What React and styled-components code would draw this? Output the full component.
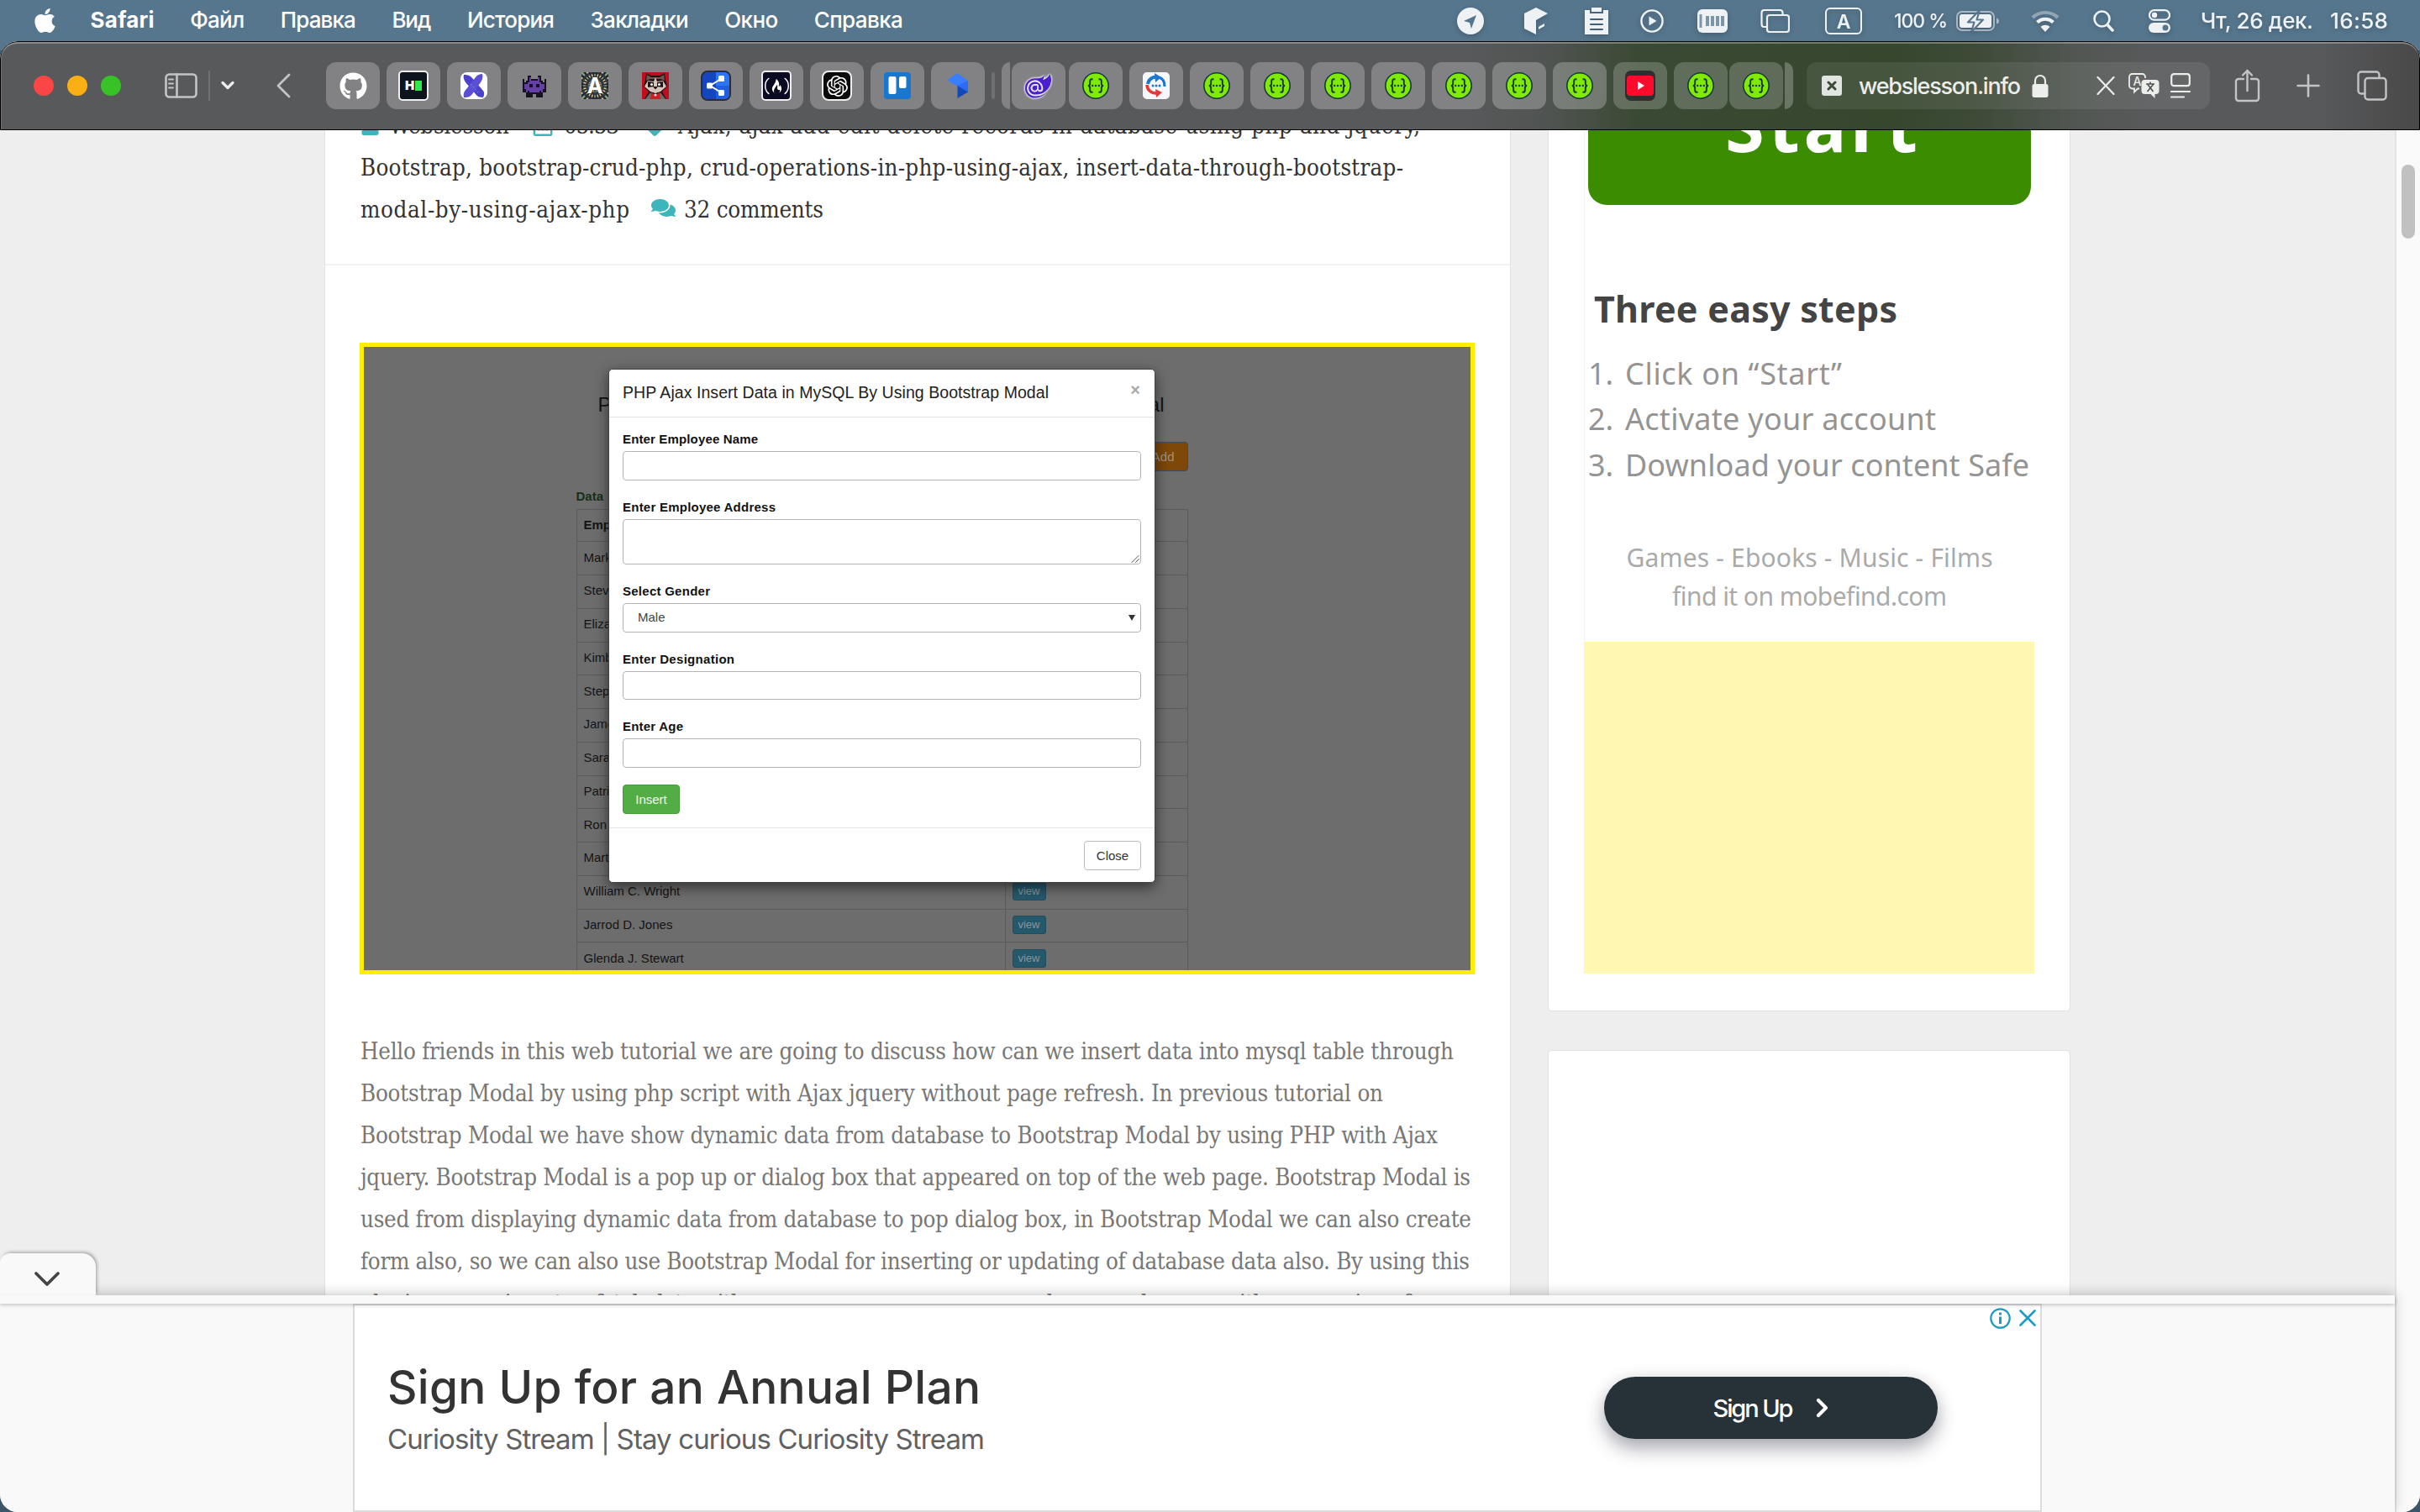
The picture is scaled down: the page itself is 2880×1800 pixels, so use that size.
import React, { useLayoutEffect, useRef, useState } from 'react';
import styled, { createGlobalStyle, css } from 'styled-components';
import { FaApple, FaGithub, FaComments, FaUser, FaRegCalendarAlt, FaTag } from 'react-icons/fa';
import { SiOpenai, SiFreecodecamp, SiBlazor } from 'react-icons/si';

const Global = createGlobalStyle`
  * { box-sizing: border-box; }
  html, body { margin: 0; padding: 0; overflow: hidden; background: #56768d; }
  svg { display: block; flex: none; }
`;

/* ---------- text set to an exact measure ---------- */
const Measured = styled.span`
  display: inline-block;
  flex: none;
  width: max-content;
  white-space: pre;
  vertical-align: top;
`;

function Fit({ w, children }) {
  const ref = useRef(null);
  const [spacing, setSpacing] = useState(0);
  useLayoutEffect(() => {
    const natural = ref.current.getBoundingClientRect().width;
    setSpacing((w - natural) / Math.max(1, children.length - 1));
  }, []);
  return (
    <Measured ref={ref} style={{ letterSpacing: spacing, marginRight: -spacing }}>
      {children}
    </Measured>
  );
}

/* ---------- system menu bar ---------- */
const Screen = styled.div`
  width: 2880px;
  height: 1800px;
  display: flex;
  flex-direction: column;
  overflow: hidden;
  background: linear-gradient(#56768d 0 60px, #3c5568 60px);
  font-family: Inter, 'Liberation Sans', sans-serif;
`;
const MenuBar = styled.header`
  height: 49px;
  flex: none;
  display: flex;
  align-items: center;
  justify-content: space-between;
  padding: 0 38px 0 40px;
  color: #fff;
  font-size: 26px;
  font-weight: 500;
  line-height: 44px;
`;
const Menus = styled.nav`
  display: flex;
  align-items: center;
  gap: 42.6px;
  height: 46px;
  padding-bottom: 1px;
`;
const MenuItem = styled.span`
  font-weight: ${(p) => (p.$bold ? 700 : 500)};
`;
const Status = styled.div`
  display: flex;
  align-items: center;
  height: 48px;
  color: #eef2f5;
  filter: drop-shadow(0 2px 3px rgba(0, 0, 0, 0.22));
`;
const Slot = styled.div`
  margin-left: ${(p) => p.$gap || 0}px;
  display: flex;
  flex: none;
  font-size: ${(p) => p.$size || 26}px;
`;

/* ---------- browser window ---------- */
const Window = styled.div`
  flex: 1;
  display: flex;
  flex-direction: column;
  border-radius: 21px;
  overflow: hidden;
  min-height: 0;
  background: #eee;
`;
const Toolbar = styled.div`
  height: 106px;
  flex: none;
  display: flex;
  align-items: center;
  padding: 0 36px 0 39px;
  border: 1px solid #000;
  border-radius: 21px 21px 0 0;
  box-shadow: inset 0 2px 0 rgba(255, 255, 255, 0.3), inset 1px 0 0 rgba(255, 255, 255, 0.15);
  color: #c3c4c5;
  background: linear-gradient(
    90deg,
    #58595b 0,
    #58595b 1740px,
    #505451 1840px,
    #3a4933 1950px,
    #37472e 2250px,
    #3c4a36 2340px,
    #535754 2480px,
    #58595b 2560px,
    #58595b 2760px,
    #484848 2880px
  );
`;
const Light = styled.i`
  width: 24px;
  height: 24px;
  flex: none;
  border-radius: 50%;
  margin-right: 16px;
  background: ${(p) => p.$color};
`;
const Rule = styled.i`
  width: ${(p) => p.$w}px;
  height: ${(p) => p.$h}px;
  flex: none;
  border-radius: 2px;
  margin-left: ${(p) => p.$gap}px;
  background: #6f7072;
`;
const Tab = styled.div`
  width: 64px;
  height: 56px;
  flex: none;
  border-radius: 12px;
  margin-left: ${(p) => (p.$gap === undefined ? 8 : p.$gap)}px;
  display: flex;
  align-items: center;
  justify-content: center;
  background: rgba(255, 255, 255, ${(p) => (p.$dim ? 0.2 : 0.25)});
`;
const StackEdge = styled.i`
  width: 10px;
  height: 56px;
  flex: none;
  background: rgba(255, 255, 255, 0.25);
  margin-left: ${(p) => p.$gap}px;
  border-radius: ${(p) => (p.$end ? '0 12px 12px 0' : '12px 0 0 12px')};
`;
const Favicon = styled.div`
  width: ${(p) => p.$w || 32}px;
  height: ${(p) => p.$w || 32}px;
  border-radius: ${(p) => (p.$r === undefined ? 5 : p.$r)}px;
  background: ${(p) => p.$bg};
  border: ${(p) => p.$border || 'none'};
  color: #fff;
  display: flex;
  align-items: center;
  justify-content: center;
  overflow: hidden;
`;
const HackGlyph = styled.div`
  display: flex;
  align-items: center;
  gap: 1px;
  font: 900 15px/16px Inter, sans-serif;
  i { width: 8px; height: 12px; background: #2fe853; }
`;
const Address = styled.div`
  width: 480px;
  height: 56px;
  flex: none;
  margin-left: 16px;
  border-radius: 12px;
  background: rgba(255, 255, 255, 0.08);
  display: flex;
  align-items: center;
  padding-left: 18px;
  color: #eceeec;
  font-size: 27px;
  font-weight: 500;
`;

/* ---------- page ---------- */
const Viewport = styled.div`
  flex: 1;
  min-height: 0;
  display: flex;
`;
const PageColumn = styled.div`
  width: 2850px;
  height: 1645px;
  flex: none;
  display: flex;
  flex-direction: column;
`;
const Page = styled.main`
  height: 1387px;
  flex: none;
  display: flex;
  align-items: flex-start;
  padding-left: 386px;
  gap: 44px;
  overflow: hidden;
  background: #eee;
`;
const Scrollbar = styled.div`
  flex: 1;
  background: #fafafa;
  border-left: 2px solid #e4e4e4;
  padding: 41px 6px 0 6px;
`;
const Thumb = styled.div`
  height: 88px;
  border-radius: 8px;
  background: #c1c1c1;
`;
const Card = styled.article`
  width: 1412px;
  flex: none;
  background: #fff;
  border: solid #e1e1e1;
  border-width: 0 1px;
`;
const serif = css`
  font-family: 'DejaVu Serif Condensed', 'DejaVu Serif', serif;
  font-stretch: condensed;
  font-size: 27.5px;
  line-height: 50px;
`;
const Meta = styled.div`
  ${serif}
  color: #333;
  margin-top: -31px;
  padding: 0 42px 40px;
  border-bottom: 2px solid #f1f1f1;
`;
const Line = styled.div`
  height: 50px;
  display: flex;
  align-items: center;
`;
const Teal = styled.span`
  display: flex;
  color: #3cb5bc;
  font-size: ${(p) => p.$s || 26}px;
  margin: 0 ${(p) => p.$after}px 0 ${(p) => p.$before || 0}px;
  padding-bottom: ${(p) => p.$lift || 0}px;
`;
const Paragraph = styled.div`
  ${serif}
  color: #777;
  margin-top: 66px;
  padding: 0 42px;
`;

/* ---------- demo image ---------- */
const Figure = styled.div`
  position: relative;
  margin: 92px 0 0 41px;
  width: 1327px;
  height: 752px;
  border: 5px solid #ffee00;
  background: #6d6d6d;
  box-shadow: inset 0 1px 0 #77740a;
  overflow: hidden;
  font: 15px/20px 'Liberation Sans', Arial, sans-serif;
`;
const Demo = styled.div`
  width: 728px;
  margin-left: 252.500px;
  display: flex;
  flex-direction: column;
  color: #141414;
`;
const DemoTitle = styled.div`
  margin: 55px 0 0 26px;
  width: 674px;
  display: flex;
  justify-content: space-between;
  font-size: 24px;
  line-height: 28px;
`;
const AddButton = styled.div`
  align-self: flex-end;
  width: 58px;
  height: 35px;
  margin-top: 30px;
  border: 1px solid #3e4a5c;
  border-radius: 4px;
  background: #7d4808;
  color: #9c9184;
  line-height: 34px;
  padding-right: 15px;
  text-align: right;
`;
const DataLabel = styled.div`
  margin-top: 20px;
  height: 25px;
  font-weight: 700;
  font-size: 15px;
  color: #16301a;
`;
const Table = styled.div`
  border: 1px solid #5a5a5a;
  border-bottom: 0;
`;
const TRow = styled.div`
  display: grid;
  grid-template-columns: 509px 1fr;
  height: ${(p) => (p.$head ? 38.3 : 39.75)}px;
  align-items: center;
  border-bottom: 1px solid #5a5a5a;
  font-weight: ${(p) => (p.$head ? 700 : 400)};
  div { height: 100%; padding: 0 0 2px 8px; display: flex; align-items: center; }
  div + div { border-left: 1px solid #5a5a5a; }
`;
const View = styled.span`
  width: 40px;
  height: 22px;
  border: 1px solid #1e4f60;
  border-radius: 3px;
  background: #26586b;
  color: #84969e;
  font-size: 13px;
  line-height: 20px;
  text-align: center;
`;
const Modal = styled.div`
  position: absolute;
  left: 291px;
  top: 26px;
  width: 651px;
  height: 612px;
  border-radius: 5px;
  border: 1px solid #444;
  background: #fff;
  box-shadow: 0 5px 16px rgba(0, 0, 0, 0.55);
  color: #222;
`;
const ModalHead = styled.div`
  height: 57px;
  border-bottom: 1px solid #e3e3e3;
  display: flex;
  justify-content: space-between;
  align-items: center;
  padding: 0 17px 2px 16px;
  font-size: 19.5px;
  b { color: #aaa; font-size: 20px; padding-bottom: 6px; }
`;
const ModalBody = styled.div`
  height: 489px;
  padding: 16px 16px 0;
  border-bottom: 1px solid #e3e3e3;
`;
const Label = styled.div`
  height: 24px;
  margin-top: ${(p) => p.$top || 0}px;
  font-weight: 700;
  font-size: 15px;
  line-height: 19px;
  color: #111;
`;
const Input = styled.div`
  height: ${(p) => p.$h || 34.6}px;
  border: 1px solid #b5b5b5;
  border-radius: 4px;
  display: flex;
  align-items: ${(p) => (p.$area ? 'flex-end' : 'center')};
  justify-content: space-between;
  padding: ${(p) => (p.$area ? 0 : '0 6px 0 17px')};
  color: #444;
  background: #fff;
  svg:only-child { margin-left: auto; }
`;
const Button = styled.div`
  width: 68px;
  height: 35px;
  border-radius: 4px;
  border: 1px solid ${(p) => (p.$green ? '#459b3a' : '#bbb')};
  background: ${(p) => (p.$green ? '#53ad45' : '#fff')};
  color: ${(p) => (p.$green ? '#eef8ec' : '#333')};
  line-height: 33px;
  text-align: center;
  margin: ${(p) => (p.$green ? '20px 0 0' : '15px 16px 0 auto')};
`;

/* ---------- sidebar ---------- */
const Sidebar = styled.aside`
  width: 622px;
  flex: none;
`;
const Widget = styled.section`
  background: #fff;
  border: 1px solid #e1e1e1;
  height: ${(p) => p.$h}px;
  margin-bottom: 46px;
  border-top-width: ${(p) => (p.$first ? 0 : 1)}px;
  border-radius: ${(p) => (p.$first ? '0 0 5px 5px' : '5px 5px 0 0')};
  padding-left: 42px;
`;
const Promo = styled.div`
  width: 536px;
  height: 1004px;
  border-left: 1px solid #fff7b2;
  font-family: 'Noto Sans', 'Open Sans', sans-serif;
  display: flex;
  flex-direction: column;
`;
const Start = styled.div`
  margin-left: 4px;
  width: 527px;
  height: 89px;
  flex: none;
  border-radius: 0 0 22px 22px;
  background: #3b8c00;
  color: #fff;
  font-weight: 700;
  font-size: 85px;
  line-height: 100px;
  padding-left: 163px;
  overflow: hidden;
  & > span { margin-top: -57px; }
`;
const StepsTitle = styled.div`
  margin: 94px 0 0 11px;
  font-weight: 700;
  font-size: 43px;
  line-height: 60px;
  color: #444;
`;
const Steps = styled.div`
  margin-top: 20px;
  font-size: 36px;
  line-height: 54.4px;
  color: #949494;
  display: grid;
  grid-template-columns: 44px 1fr;
  padding-left: 4px;
`;
const Tagline = styled.div`
  margin-top: 60px;
  font-size: 30px;
  line-height: 45.4px;
  color: #aaa;
  display: flex;
  flex-direction: column;
  align-items: center;
`;
const YellowSlot = styled.div`
  margin-top: auto;
  height: 395px;
  flex: none;
  background: #fff7b2;
`;

/* ---------- anchored advert ---------- */
const Anchor = styled.footer`
  position: relative;
  height: 258px;
  flex: none;
  display: flex;
  flex-direction: column;
  background: #f9f9f9;
  box-shadow: 0 -2px 14px rgba(0, 0, 0, 0.2);
`;
const Handle = styled.div`
  position: absolute;
  left: 0;
  top: -50px;
  width: 114px;
  height: 51px;
  border-radius: 12px 16px 0 0;
  background: #f9f9f9;
  box-shadow: 2px -2px 4px -1px rgba(0, 0, 0, 0.35);
  clip-path: inset(-8px -12px 1px 0);
  display: flex;
  justify-content: center;
  padding: 21px 3px 0 0;
`;
const Strip = styled.div`
  height: 10px;
  flex: none;
  z-index: 1;
  background: #f9f9f9;
  box-shadow: 0 2px 4px rgba(0, 0, 0, 0.2);
`;
const Advert = styled.div`
  width: 2010px;
  height: 248px;
  margin-left: 420px;
  border: 2px solid #dcdcdc;
  background: #fff;
  display: flex;
  padding-left: 39px;
`;
const Copy = styled.div`
  width: 1448px;
  padding-top: 57px;
`;
const Headline = styled.div`
  font-size: 55px;
  font-weight: 500;
  line-height: 80px;
  color: #333;
  height: 78px;
`;
const Subline = styled.div`
  font-size: 33px;
  line-height: 48px;
  color: #616161;
`;
const SignUp = styled.div`
  width: 397px;
  height: 74px;
  flex: none;
  margin-top: 85px;
  border-radius: 37px;
  background: #263238;
  color: #fff;
  box-shadow: 0 12px 22px rgba(38, 42, 60, 0.36), 0 0 20px rgba(0, 0, 0, 0.08);
  font-size: 29px;
  font-weight: 500;
  display: flex;
  align-items: center;
  justify-content: center;
  gap: 27px;
`;
const AdChoices = styled.div`
  margin: 2px 5px 0 auto;
  display: flex;
  align-items: center;
  gap: 10px;
  height: 26px;
`;

const Svg = ({ w, h, sw = 2, children }) => (
  <svg width={w} height={h} viewBox={`0 0 ${w} ${h}`} fill="none" stroke="currentColor" strokeWidth={sw} strokeLinecap="round" strokeLinejoin="round">
    {children}
  </svg>
);

const Swagger = () => (
  <svg width="32" height="32" viewBox="0 0 32 32">
    <circle cx="16" cy="16" r="15.2" fill="#80ea02" stroke="#173647" strokeWidth="1.6" />
    <g fill="none" stroke="#173647" strokeWidth="1.9">
      <path d="M12.500 8.200h-1c-1.800 0-2.300.8-2.300 2.400v2.600c0 1.700-.7 2.800-2.400 2.800 1.700 0 2.400 1.100 2.400 2.800v2.600c0 1.600.5 2.400 2.300 2.400h1" />
      <path d="M19.500 8.200h1c1.800 0 2.300.8 2.300 2.400v2.600c0 1.700.7 2.800 2.400 2.800-1.700 0-2.400 1.100-2.400 2.800v2.600c0 1.600-.5 2.400-2.300 2.400h-1" />
    </g>
    <g fill="#173647"><circle cx="12.200" cy="16" r="1.200" /><circle cx="16" cy="16" r="1.200" /><circle cx="19.800" cy="16" r="1.200" /></g>
  </svg>
);

const Invader = () => (
  <svg width="32" height="32" viewBox="0 0 16 16" shapeRendering="crispEdges">
    <path fill="#17121f" d="M4 2h2v2h4V2h2v3h1v1h2v6h-2v2h-2v1H9v-2H7v2H5v-1H3v-2H1V6h2V5h1zM1 4h1v3H1zM14 4h1v3h-1zM3 13h2v2H3zM11 13h2v2h-2z" />
    <path fill="#6540a5" d="M5 3h1v2h4V3h1v3h1v1h2v3h-1v2h-1v-1h-1v1H5v-1H4v1H3v-2H2V7h2V6h1z" />
    <path fill="#17121f" d="M5 7h2v2H5zM9 7h2v2H9z" />
  </svg>
);

const Raccoon = () => (
  <svg width="32" height="32" viewBox="0 0 32 32">
    <rect width="32" height="32" fill="#c40d1c" />
    <path d="M5 1l6 3h10l6-3 1 8 2 8-6 6 5 9H3l5-9-6-6 2-8z" fill="#1c1518" />
    <path d="M6 3l5 3h10l5-3 1 7-5-2H10l-5 2z" fill="#6f564e" />
    <path d="M3 17l4-7 7 1 2-5 2 5 7-1 4 7-7 6-6 2-6-2z" fill="#d8c4b8" />
    <path d="M7 11l7 1v5l-7 1zM25 11l-7 1v5l7 1z" fill="#1c1518" />
    <circle cx="11.500" cy="14.500" r="1.500" fill="#fff" /><circle cx="20.500" cy="14.500" r="1.500" fill="#fff" />
    <path d="M13 17h6l-3 3.500z" fill="#1c1518" />
    <path d="M4 32l6-8 4 8zM28 32l-6-8-4 8z" fill="#6f6a6a" />
    <path d="M11 24l5 3 5-3 1 8H10z" fill="#d21b22" /><circle cx="16" cy="27" r="1.600" fill="#ddd" />
  </svg>
);

const rays = Array.from({ length: 24 }, (_, i) => i * 15);
const Mosaic = () => (
  <svg width="32" height="32" viewBox="0 0 32 32">
    <rect width="32" height="32" fill="#20242e" />
    {rays.map((a, i) => (
      <g key={a} transform={`rotate(${a} 16 16)`}>
        <path d="M16 16L14.500 -8h3z" fill={i % 3 ? '#e0c692' : '#7fa37c'} />
        <path d="M15.200 5h1.600v3h-1.600zM15 -1h2v3h-2z" fill="#2a3442" />
      </g>
    ))}
    <text x="16" y="25" textAnchor="middle" fontFamily="Inter" fontWeight="700" fontSize="25" fill="#fff">A</text>
  </svg>
);

const Cross = () => (
  <svg width="32" height="32" viewBox="0 0 32 32">
    <path d="M4 3c5 0 8 1 11 5l12 14c2 3 1 6 0 8-4 0-7-1-9-4L6 12C4 9 3 6 4 3z" fill="#4b43cc" />
    <path d="M4 30c-1-4 0-7 3-10L18 6c2-3 5-4 8-4 1 4 0 7-2 10L14 26c-3 4-6 4-10 4z" fill="#5b4fd8" />
    <path d="M12 14l9 10" stroke="#8a86ea" strokeWidth="1" strokeDasharray="2 2" />
  </svg>
);

const Shares = () => (
  <svg width="32" height="32" viewBox="0 0 32 32">
    <rect width="32" height="32" fill="#1546c0" /><path d="M16 0h16v32H16z" fill="#2e74f5" /><path d="M16 16h16v16H16z" fill="#1f5fe0" />
    <path d="M22 8L9 16l13 8" stroke="#fff" strokeWidth="2" fill="none" />
    <g fill="#fff"><rect x="5" y="12.500" width="7" height="7" rx="1.500" /><rect x="19" y="4" width="7" height="7" rx="1.500" /><rect x="19" y="21" width="7" height="7" rx="1.500" /></g>
  </svg>
);

const Trello = () => (
  <svg width="32" height="32" viewBox="0 0 32 32"><rect width="32" height="32" rx="4" fill="#1877cf" /><rect x="5.500" y="5" width="9" height="21" rx="2" fill="#fff" /><rect x="18" y="5" width="8.500" height="14" rx="2" fill="#fff" /></svg>
);

const Kite = () => (
  <svg width="32" height="32" viewBox="0 0 32 32">
    <path d="M3 9.500L15 1l13 9v14z" fill="#3b7dff" />
    <path d="M28 10v14L15 16z" fill="#2b6cf5" />
    <path d="M15.500 16v15L28 23.500z" fill="#1149b8" />
  </svg>
);

const Sync = () => (
  <svg width="32" height="32" viewBox="0 0 32 32">
    <path d="M6 14c1-6 6-9 11-8" stroke="#1976d2" strokeWidth="4" fill="none" /><path d="M14 1l8 5-7 6z" fill="#1976d2" />
    <path d="M19 6c4 1 7 4 7 11" stroke="#1976d2" strokeWidth="3" fill="none" />
    <path d="M5 15c0 6 5 10 11 10" stroke="#e53935" strokeWidth="3.500" fill="none" /><path d="M15 20l8 4-7 6z" fill="#e53935" />
    <g fill="#1976d2"><circle cx="12" cy="16" r="1.500" /><circle cx="16" cy="16" r="1.500" /><circle cx="20" cy="16" r="1.500" /></g>
  </svg>
);

const pinned = [
  <FaGithub size={33} color="#fff" />,
  <Favicon $w={36} $bg="#0d141e" $border="2px solid #eee"><HackGlyph>H<i /></HackGlyph></Favicon>,
  <Favicon $bg="#fff" $r={8}><Cross /></Favicon>,
  <Invader />,
  <Mosaic />,
  <Raccoon />,
  <Favicon $w={36} $r={8} $bg="#1546c0" $border="2px solid #2b2d33"><Shares /></Favicon>,
  <Favicon $w={36} $bg="#0a0a23" $border="2px solid #eee"><SiFreecodecamp size={29} /></Favicon>,
  <Favicon $w={36} $r={8} $bg="#0b0b0b" $border="2px solid #eee"><SiOpenai size={25} /></Favicon>,
  <Trello />,
  <Kite />,
];
const grouped = [
  { icon: <SiBlazor size={31} color="#4a1fd0" style={{ filter: 'drop-shadow(0 0 1px #fff) drop-shadow(0 0 1px #fff)' }} />, gap: 1.5 },
  { icon: <Swagger />, gap: 4.5 },
  { icon: <Favicon $bg="#f5f8fb"><Sync /></Favicon> },
  ...Array.from({ length: 7 }, () => ({ icon: <Swagger /> })),
  {
    icon: (
      <Favicon $w={36} $r={7} $bg="#2f2f30">
        <svg width="32" height="24" viewBox="0 0 32 24"><rect width="32" height="24" rx="4" fill="#ff0a2c" /><path d="M13 7v10l8-5z" fill="#fff" /></svg>
      </Favicon>
    ), dim: true,
  },
  { icon: <Swagger />, dim: true },
  { icon: <Swagger />, gap: 2, dim: true },
];

const menus = [['Safari', 76], ['Файл', 65], ['Правка', 90], ['Вид', 47], ['История', 104], ['Закладки', 117], ['Окно', 64], ['Справка', 106]];

const people = ['Mark', 'Steve', 'Eliza', 'Kimb', 'Steph', 'Jame', 'Sara', 'Patri', 'Ron', 'Mart', 'William C. Wright', 'Jarrod D. Jones', 'Glenda J. Stewart'];

const body = [
  ['Hello friends in this web tutorial we are going to discuss how can we insert data into mysql table through', 1301],
  ['Bootstrap Modal by using php script with Ajax jquery without page refresh. In previous tutorial on', 1217],
  ['Bootstrap Modal we have show dynamic data from database to Bootstrap Modal by using PHP with Ajax', 1282],
  ['jquery. Bootstrap Modal is a pop up or dialog box that appeared on top of the web page. Bootstrap Modal is', 1321],
  ['used from displaying dynamic data from database to pop dialog box, in Bootstrap Modal we can also create', 1322],
  ['form also, so we can also use Bootstrap Modal for inserting or updating of database data also. By using this', 1320],
  ['plugin we can insert or fetch data with same page or same popup and we can do more with any version of', 1250],
];

function StatusIcons() {
  return (
    <Status>
      <Slot><Svg w={32} h={32} sw={0}><circle cx="16" cy="16" r="16" fill="currentColor" /><path d="M8 16l15-7-6 16-2-7z" fill="#56768d" /></Svg></Slot>
      <Slot $gap={48}><Svg w={28} h={32} sw={0}><path d="M0 7L14 0l14 7-14 8v17L0 25z" fill="currentColor" /><path d="M17 23l7-4v3l-7 4z" fill="currentColor" /></Svg></Slot>
      <Slot $gap={44}><Svg w={28} h={32}><path d="M0 3h6v4h16V3h6v29H0z" fill="currentColor" stroke="none" /><path d="M8 0h12v5H8z" fill="currentColor" stroke="none" /><path d="M7 14h14M7 20h14M7 26h14" stroke="#3f6078" /></Svg></Slot>
      <Slot $gap={38}><Svg w={28} h={28} sw={2.4}><circle cx="14" cy="14" r="12.600" /><path d="M10.500 8.500l9 5.500-9 5.500z" fill="currentColor" stroke="none" /></Svg></Slot>
      <Slot $gap={40}><Svg w={36} h={28} sw={0}><rect width="36" height="28" rx="6" fill="currentColor" /><path d="M2.500 6h3v16h-3zM10 8h4v12h-4zM16 8h4v12h-4zM22 8h4v12h-4zM28 8h4v12h-4z" fill="#56768d" fillOpacity=".75" /></Svg></Slot>
      <Slot $gap={39}><Svg w={35} h={28} sw={2.2}><path d="M7 21H4.500a3 3 0 0 1-3-3V4a3 3 0 0 1 3-3h19a3 3 0 0 1 3 3v2" /><rect x="8" y="7" width="26" height="20" rx="3" /></Svg></Slot>
      <Slot $gap={42}><svg width="44" height="32" viewBox="0 0 44 32"><rect x="1" y="1" width="42" height="30" rx="5" fill="none" stroke="currentColor" strokeWidth="2" /><text x="22" y="24.500" textAnchor="middle" fontFamily="Inter" fontWeight="600" fontSize="23" fill="currentColor">A</text></svg></Slot>
      <Slot $gap={38} $size={23}><Fit w={64}>100 %</Fit></Slot>
      <Slot $gap={10}>
        <Svg w={51} h={24}>
          <rect x="1" y="1" width="44" height="22" rx="6" opacity=".55" /><rect x="4" y="4" width="38" height="16" rx="3" fill="currentColor" stroke="none" /><path d="M48 8.500v7c2-.5 3-2 3-3.500s-1-3-3-3.500z" fill="currentColor" opacity=".55" stroke="none" />
          <path d="M28 -1L14 13.500h7.500L18 25l14-14.500h-7.500z" fill="currentColor" stroke="#56768d" strokeWidth="2.200" />
        </Svg>
      </Slot>
      <Slot $gap={38}><Svg w={34} h={26} sw={4.200}><path d="M2 9C10 1 24 1 32 9" opacity=".4" strokeLinecap="butt" /><path d="M7.500 14.500c5.500-5 13.500-5 19 0" strokeLinecap="butt" /><path d="M11.500 20c3-3 8-3 11 0L17 26z" fill="currentColor" stroke="none" /></Svg></Slot>
      <Slot $gap={40}><Svg w={25} h={26} sw={2.600}><circle cx="10.500" cy="10.500" r="9" /><path d="M17 17.500l6 6.500" strokeWidth="3.500" /></Svg></Slot>
      <Slot $gap={41}><Svg w={26} h={28} sw={2.200}><rect x="1" y="1.200" width="24" height="11.500" rx="5.750" /><circle cx="7" cy="7" r="3.200" fill="currentColor" stroke="none" /><rect x="0" y="16" width="26" height="12" rx="6" fill="currentColor" stroke="none" /><circle cx="20" cy="22" r="3.500" fill="#56768d" stroke="none" /></Svg></Slot>
      <Slot $gap={36}><Fit w={134}>Чт, 26 дек.</Fit></Slot>
      <Slot $gap={20}><Fit w={69}>16:58</Fit></Slot>
    </Status>
  );
}

function BrowserBar() {
  return (
    <Toolbar>
      <Light $color="#fc4545" /><Light $color="#fcae15" /><Light $color="#37c327" />
      <Slot $gap={36}><Svg w={39} h={30} sw={2.600}><rect x="1.500" y="1.500" width="36" height="27" rx="4" /><path d="M14.500 1.500v27" /><path d="M5 7.500h5M5 12.500h5M5 17.500h5" strokeWidth="2" /></Svg></Slot>
      <Rule $w={2} $h={36} $gap={13} />
      <Slot $gap={13}><Svg w={16} h={12} sw={3.200}><path d="M2 2.500l6 6 6-6" stroke="#eee" /></Svg></Slot>
      <Slot $gap={49}><Svg w={18} h={30} sw={2.800}><path d="M16 2L3 15l13 13" /></Svg></Slot>
      {pinned.map((icon, i) => <Tab key={i} $gap={i ? 8 : 42}>{icon}</Tab>)}
      <Rule $w={4} $h={32} $gap={8} />
      <StackEdge $gap={8} />
      {grouped.map((t, i) => <Tab key={i} $gap={t.gap} $dim={t.dim}>{t.icon}</Tab>)}
      <StackEdge $gap={2} $end />
      <Address>
        <Favicon $w={24} $r={3} $bg="#e2e5e1"><Svg w={12} h={12} sw={3}><path d="M2 2l8 8M10 2l-8 8" stroke="#3d4a38" /></Svg></Favicon>
        <Slot $gap={20} $size={27}><Fit w={193}>webslesson.info</Fit></Slot>
        <Slot $gap={13}><Svg w={20} h={28} sw={2.200}><path d="M4 13V8a6 6 0 0 1 12 0v5" /><rect x=".5" y="12" width="19" height="16" rx="2.500" fill="currentColor" stroke="none" /></Svg></Slot>
        <Slot $gap={57}><Svg w={22} h={22} sw={2.200}><path d="M1.500 1l19 20M20.500 1l-19 20" /></Svg></Slot>
        <Slot $gap={16}>
          <svg width="37" height="30" viewBox="0 0 37 30" fill="none" stroke="currentColor">
            <path d="M13 18.500h-2l-4 4v-4H4.500a3.500 3.500 0 0 1-3.500-3.500V4.500A3.500 3.500 0 0 1 4.500 1h12A3.500 3.500 0 0 1 20 4.500V6" strokeWidth="1.800" />
            <text x="10.500" y="14.500" fontSize="14" fontFamily="Inter" textAnchor="middle" fill="currentColor" stroke="none">A</text>
            <path d="M19.500 8h13a4 4 0 0 1 4 4v9a4 4 0 0 1-4 4h-1v5l-5-5h-7a4 4 0 0 1-4-4v-9a4 4 0 0 1 4-4z" fill="currentColor" stroke="none" />
            <path d="M21 13h10M26 10.500V13M23 13.500l6.500 8.500M29.500 13.500L22.500 22" stroke="#535754" strokeWidth="1.700" />
          </svg>
        </Slot>
        <Slot $gap={13}><Svg w={24} h={30} sw={2.200}><rect x="1.200" y="1.200" width="21.600" height="14" rx="3" /><path d="M1 22h22M1 28.500h15" /></Svg></Slot>
      </Address>
      <Slot $gap={29}><Svg w={31} h={40} sw={2.400}><path d="M11 12H5a3 3 0 0 0-3 3v20a3 3 0 0 0 3 3h21a3 3 0 0 0 3-3V15a3 3 0 0 0-3-3h-6" /><path d="M15.500 26V2M10 7.500L15.500 2 21 7.500" /></Svg></Slot>
      <Slot $gap={43}><Svg w={28} h={28} sw={2.600}><path d="M14 1.500v25M1.500 14h25" /></Svg></Slot>
      <Slot $gap={44}><Svg w={36} h={36} sw={2.400}><path d="M9 27.500H5a3.500 3.500 0 0 1-3.500-3.500V5A3.500 3.500 0 0 1 5 1.500h18A3.500 3.500 0 0 1 26.500 5v3" /><rect x="9.500" y="9" width="25" height="25.500" rx="3.500" /></Svg></Slot>
    </Toolbar>
  );
}

function DemoImage() {
  return (
    <Figure>
      <Demo>
        <DemoTitle><span>P</span><span>al</span></DemoTitle>
        <AddButton>Add</AddButton>
        <DataLabel>Data</DataLabel>
        <Table>
          <TRow $head><div>Empl</div><div /></TRow>
          {people.map((name) => <TRow key={name}><div>{name}</div><div><View>view</View></div></TRow>)}
        </Table>
      </Demo>
      <Modal>
        <ModalHead><Fit w={507}>PHP Ajax Insert Data in MySQL By Using Bootstrap Modal</Fit><b>×</b></ModalHead>
        <ModalBody>
          <Label><Fit w={161}>Enter Employee Name</Fit></Label><Input />
          <Label $top={22}><Fit w={182}>Enter Employee Address</Fit></Label>
          <Input $h={54.6} $area><Svg w={11} h={11} sw={1}><path d="M1 9.500l8-8M5.500 9.500l4-4" stroke="#555" /></Svg></Input>
          <Label $top={22}><Fit w={104}>Select Gender</Fit></Label>
          <Input>Male<svg width="8" height="7" viewBox="0 0 8 7"><path d="M0 0h8L4 7z" fill="#333" /></svg></Input>
          <Label $top={22}><Fit w={133}>Enter Designation</Fit></Label><Input />
          <Label $top={22}><Fit w={72}>Enter Age</Fit></Label><Input />
          <Button $green>Insert</Button>
        </ModalBody>
        <Button>Close</Button>
      </Modal>
    </Figure>
  );
}

export default function App() {
  return (
    <Screen>
      <Global />
      <MenuBar>
        <Menus>
          <FaApple size={33} style={{ margin: '0 -5px 0 -3px' }} />
          {menus.map(([label, w], i) => <MenuItem key={label} $bold={i === 0}><Fit w={w}>{label}</Fit></MenuItem>)}
        </Menus>
        <StatusIcons />
      </MenuBar>
      <Window>
        <BrowserBar />
        <Viewport>
          <PageColumn>
            <Page>
              <Card>
                <Meta>
                  <Line>
                    <Teal $after={11} $s={23}><FaUser /></Teal><Fit w={143}>Webslesson</Fit>
                    <Teal $before={27} $after={12}><FaRegCalendarAlt /></Teal><Fit w={66}>05:53</Fit>
                    <Teal $before={29} $after={15}><FaTag /></Teal>
                    <Fit w={883}>Ajax, ajax-add-edit-delete-records-in-database-using-php-and-jquery,</Fit>
                  </Line>
                  <Line><Fit w={1241}>Bootstrap, bootstrap-crud-php, crud-operations-in-php-using-ajax, insert-data-through-bootstrap-</Fit></Line>
                  <Line>
                    <Fit w={320}>modal-by-using-ajax-php</Fit>
                    <Teal $before={26} $after={10} $s={29} $lift={3}><FaComments style={{ transform: 'scaleY(0.92)' }} /></Teal><Fit w={166}>32 comments</Fit>
                  </Line>
                </Meta>
                <DemoImage />
                <Paragraph>
                  {body.map(([text, w]) => <Line key={text}><Fit w={w}>{text}</Fit></Line>)}
                </Paragraph>
              </Card>
              <Sidebar>
                <Widget $first $h={1049}>
                  <Promo>
                    <Start><Fit w={229}>Start</Fit></Start>
                    <StepsTitle><Fit w={361}>Three easy steps</Fit></StepsTitle>
                    <Steps>
                      <span>1.</span><Fit w={258}>Click on “Start”</Fit>
                      <span>2.</span><Fit w={370}>Activate your account</Fit>
                      <span>3.</span><Fit w={481}>Download your content Safe</Fit>
                    </Steps>
                    <Tagline>
                      <Fit w={436}>Games - Ebooks - Music - Films</Fit>
                      <Fit w={327}>find it on mobefind.com</Fit>
                    </Tagline>
                    <YellowSlot />
                  </Promo>
                </Widget>
                <Widget $h={400} />
              </Sidebar>
            </Page>
            <Anchor>
              <Handle><Svg w={32} h={20} sw={3.600}><path d="M3 3l13 13L29 3" stroke="#444" /></Svg></Handle>
              <Strip />
              <Advert>
                <Copy>
                  <Headline><Fit w={706}>Sign Up for an Annual Plan</Fit></Headline>
                  <Subline><Fit w={711}>Curiosity Stream | Stay curious Curiosity Stream</Fit></Subline>
                </Copy>
                <SignUp><Fit w={96}>Sign Up</Fit><Svg w={15} h={24} sw={4.200}><path d="M3 3l9 9-9 9" /></Svg></SignUp>
                <AdChoices>
                  <svg width="25" height="25" viewBox="0 0 25 25"><circle cx="12.500" cy="12.500" r="11.200" fill="none" stroke="#1a9cc4" strokeWidth="2.200" /><path d="M11 10.500h3v8.500h-3zM11 5.500h3v3h-3z" fill="#1a9cc4" /></svg>
                  <Svg w={20} h={20} sw={2.600}><path d="M1.500 1.500l17 17M18.500 1.500l-17 17" stroke="#1a9cc4" /></Svg>
                </AdChoices>
              </Advert>
            </Anchor>
          </PageColumn>
          <Scrollbar><Thumb /></Scrollbar>
        </Viewport>
      </Window>
    </Screen>
  );
}
